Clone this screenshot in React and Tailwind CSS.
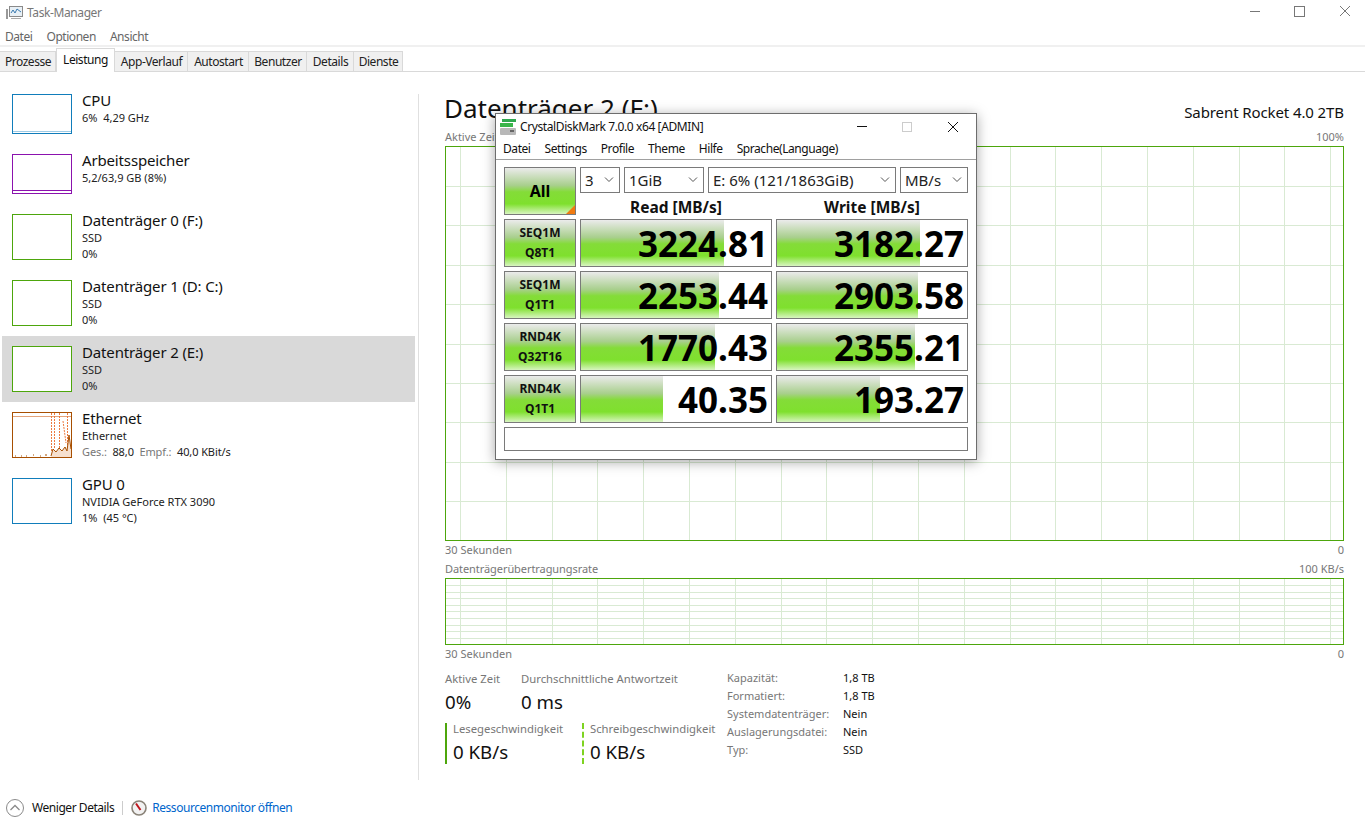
import React from 'react';

const tabs = [
    { t: 'Prozesse', w: 'w-[56px]' },
    { t: 'Leistung', w: 'w-[59px]', active: true },
    { t: 'App-Verlauf', w: 'w-[73px]' },
    { t: 'Autostart', w: 'w-[61px]' },
    { t: 'Benutzer', w: 'w-[58px]' },
    { t: 'Details', w: 'w-[47px]' },
    { t: 'Dienste', w: 'w-[49px]' },
];

const sidebarItems = [
    { name: 'CPU', lines: [['6%  4,29 GHz']], border: 'border-[#117dbb]', h: 'h-[40px]', row: 'h-[50px]', kind: 'cpu' },
    { name: 'Arbeitsspeicher', lines: [['5,2/63,9 GB (8%)']], border: 'border-[#8b12ae]', h: 'h-[40px]', row: 'h-[60px] pt-[10px]', kind: 'ram' },
    { name: 'Datenträger 0 (F:)', lines: [['SSD'], ['0%']], border: 'border-[#4da60c]', h: 'h-[46px]', row: 'h-[66px] pt-[10px]' },
    { name: 'Datenträger 1 (D: C:)', lines: [['SSD'], ['0%']], border: 'border-[#4da60c]', h: 'h-[46px]', row: 'h-[66px] pt-[10px]' },
    { name: 'Datenträger 2 (E:)', lines: [['SSD'], ['0%']], border: 'border-[#4da60c]', h: 'h-[46px]', row: 'h-[66px] pt-[10px]', active: true },
    { name: 'Ethernet', lines: [['Ethernet'], ['Ges.:', '88,0', 'Empf.:', '40,0 KBit/s']], border: 'border-[#a74f01]', h: 'h-[46px]', row: 'h-[66px] pt-[10px]', kind: 'eth' },
    { name: 'GPU 0', lines: [['NVIDIA GeForce RTX 3090'], ['1%  (45 °C)']], border: 'border-[#117dbb]', h: 'h-[46px]', row: 'h-[66px] pt-[10px]' },
];

const results = [
    { a: 'SEQ1M', b: 'Q8T1', read: '3224.81', readW: 143, write: '3182.27', writeW: 143 },
    { a: 'SEQ1M', b: 'Q1T1', read: '2253.44', readW: 138, write: '2903.58', writeW: 141 },
    { a: 'RND4K', b: 'Q32T16', read: '1770.43', readW: 134, write: '2355.21', writeW: 138 },
    { a: 'RND4K', b: 'Q1T1', read: '40.35', readW: 82, write: '193.27', writeW: 103 },
];

const stats = [
    ['Kapazität:', '1,8 TB'],
    ['Formatiert:', '1,8 TB'],
    ['Systemdatenträger:', 'Nein'],
    ['Auslagerungsdatei:', 'Nein'],
    ['Typ:', 'SSD'],
];

function EthGraph() {
    return (
        <svg viewBox="0 0 58 44" className="absolute inset-0 w-full h-full">
            <path d="M0 3.5H58" stroke="#e3a47c" fill="none" />
            <path d="M38.5 0V38M41.5 0V36M46.5 0V36M50 8L53 30M54.5 0V36" stroke="#ec7a40" strokeDasharray="2 1" fill="none" />
            <path d="M38 44L40 36L43 39L46 35L49 38L52 34L54 38L56 22L58 36V44Z" fill="#f6e0cf" />
            <path d="M38 43L40 36L43 39L46 35L49 38L52 34L54 38L56 22L58 36" stroke="#a74f01" fill="none" />
            <path d="M2 43h1M8 43h1M13 43h1M20 42h1M27 43h1M32 42h2" stroke="#a74f01" fill="none" />
        </svg>
    );
}

function SidebarItem({ item }) {
    return (
        <div className={`flex items-start pl-[10px] ${item.row} ${item.active ? 'bg-[#d9d9d9]' : ''}`}>
            <div className={`relative w-[60px] ${item.h} shrink-0 border ${item.border} bg-white`}>
                {item.kind === 'eth' && <EthGraph />}
                {item.kind === 'cpu' && <div className="absolute left-0 right-0 bottom-[1px] h-px bg-[#9fcbe5]" />}
                {item.kind === 'ram' && <div className="absolute left-0 right-0 bottom-0 h-[3px] border-t border-[#8b12ae]" />}
            </div>
            <div className="ml-[10px] -mt-[3px]">
                <div className="text-[15px] leading-[19px] tracking-[-0.15px] text-[#111]">{item.name}</div>
                {item.lines.map((parts, i) => (
                    <div key={i} className="text-[11px] leading-[16px] text-[#222] whitespace-pre">
                        {parts.length === 1 ? parts[0] : (
                            <span className="tracking-[-0.1px]">
                                <span className="text-[#777]">{parts[0]}</span>{'  '}{parts[1]}{'  '}<span className="text-[#777]">{parts[2]}</span>{'  '}{parts[3]}
                            </span>
                        )}
                    </div>
                ))}
            </div>
        </div>
    );
}

function Grid({ width, height, stepX, startX, stepY, startY }) {
    const xs = [];
    for (let x = startX; x < width; x += stepX) xs.push(Math.round(x) + 0.5);
    const ys = [];
    for (let y = startY; y < height; y += stepY) ys.push(Math.round(y) + 0.5);
    return (
        <svg width={width} height={height} className="block">
            {xs.map((x) => <line key={x} x1={x} x2={x} y1="0" y2={height} stroke="#d9ead3" />)}
            {ys.map((y) => <line key={y} y1={y} y2={y} x1="0" x2={width} stroke="#d9ead3" />)}
        </svg>
    );
}

function Select({ w, value }) {
    return (
        <div className={`${w} h-[26px] border border-[#7a7a7a] bg-white flex items-center justify-between pl-[4px] pr-[5px] text-[15px] text-[#222]`}>
            <span>{value}</span>
            <svg width="10" height="6" viewBox="0 0 10 6" fill="none" stroke="#555"><path d="M1 0.5L5 4.5L9 0.5" /></svg>
        </div>
    );
}

function ResultCell({ value, barW }) {
    return (
        <div className="relative w-[192px] h-[48px] border border-[#7a7a7a] bg-white overflow-hidden">
            <div
                className="absolute left-0 top-0 bottom-0 bg-[linear-gradient(180deg,#ebebeb_0%,#a8cf8c_38%,#84dc38_52%,#7fe02e_78%,#d8f5c0_100%)]"
                style={{ width: barW }}
            />
            <div className="relative text-right pr-[3px] text-[35px] leading-[48px] font-bold text-black">{value}</div>
        </div>
    );
}

function CrystalDiskMark() {
    return (
        <div className="absolute left-[495px] top-[113px] w-[482px] h-[347px] bg-white border border-[#6d6d6d] shadow-[0_2px_12px_rgba(0,0,0,0.35)]">
            <div className="flex items-center h-[25px] pl-[3px] relative">
                <svg width="18" height="18" viewBox="0 0 18 18" className="shrink-0">
                    <rect x="3" y="1" width="14" height="3" fill="#2fa84f" />
                    <rect x="1" y="5" width="13" height="4" fill="#39b54a" />
                    <rect x="1" y="10" width="16" height="7" rx="1" fill="#b8b8b8" />
                    <rect x="11" y="12" width="4" height="2" fill="#666" />
                </svg>
                <span className="ml-[3px] text-[12px] tracking-[-0.4px] text-[#111]">CrystalDiskMark 7.0.0 x64 [ADMIN]</span>
                <svg width="102" height="12" viewBox="0 0 102 12" fill="none" className="absolute left-[361px] top-[7px]">
                    <path d="M0 5.5H10" stroke="#111" />
                    <rect x="45.5" y="1.5" width="9" height="9" stroke="#ccc" />
                    <path d="M91 1L101 11M101 1L91 11" stroke="#111" />
                </svg>
            </div>
            <div className="flex h-[21px] items-center gap-[14px] pl-[7px] text-[12px] tracking-[-0.43px] text-[#111] border-b border-[#a0a0a0]">
                <span>Datei</span>
                <span>Settings</span>
                <span>Profile</span>
                <span>Theme</span>
                <span>Hilfe</span>
                <span>Sprache(Language)</span>
            </div>
            <div className="pl-[8px] pt-[7px]">
                <div className="flex gap-[4px]">
                    <div className="relative w-[72px] h-[48px] border border-[#7a7a7a] flex items-center justify-center text-[16px] font-bold text-black bg-[linear-gradient(180deg,#ebebeb_0%,#a8cf8c_38%,#84dc38_52%,#7fe02e_78%,#d8f5c0_100%)]">
                        All
                        <div className="absolute right-0 bottom-0 w-0 h-0 border-l-[9px] border-l-transparent border-b-[9px] border-b-[#f07a10]" />
                    </div>
                    <div className="w-[388px]">
                        <div className="flex gap-[4px]">
                            <Select w="w-[40px]" value="3" />
                            <Select w="w-[80px]" value="1GiB" />
                            <Select w="w-[188px]" value="E: 6% (121/1863GiB)" />
                            <Select w="w-[68px]" value="MB/s" />
                        </div>
                        <div className="flex gap-[4px] h-[22px]">
                            <div className="w-[192px] text-center text-[15.5px] font-bold leading-[28px] text-[#111]">Read [MB/s]</div>
                            <div className="w-[192px] text-center text-[15.5px] font-bold leading-[28px] text-[#111]">Write [MB/s]</div>
                        </div>
                    </div>
                </div>
                <div className="flex flex-col gap-[4px] mt-[4px]">
                    {results.map((r) => (
                        <div key={r.a + r.b} className="flex gap-[4px]">
                            <div className="w-[72px] h-[48px] border border-[#7a7a7a] flex flex-col items-center justify-center text-[12px] leading-[20px] font-bold text-[#111] bg-[linear-gradient(180deg,#ebebeb_0%,#a8cf8c_38%,#84dc38_52%,#7fe02e_78%,#d8f5c0_100%)]">
                                <span>{r.a}</span>
                                <span>{r.b}</span>
                            </div>
                            <ResultCell value={r.read} barW={r.readW} />
                            <ResultCell value={r.write} barW={r.writeW} />
                        </div>
                    ))}
                    <div className="w-[464px] h-[24px] border border-[#7a7a7a]" />
                </div>
            </div>
        </div>
    );
}

export default function App() {
    return (
        <div className="relative w-[1365px] h-[831px] bg-white overflow-hidden font-['Noto_Sans',sans-serif] text-[12px]">
            <div className="flex items-center h-[26px] pl-[5px] relative">
                <svg width="18" height="16" viewBox="0 0 18 16" fill="none">
                    <rect x="4.5" y="1.5" width="13" height="10" fill="#e8f0f6" stroke="#8a8a8a" />
                    <path d="M6 8L8 5L10 8L12 4L16 7" stroke="#3a7ab0" />
                    <rect x="1" y="4" width="2" height="10" fill="#999" />
                    <path d="M6 13.5H16" stroke="#aaa" />
                </svg>
                <span className="ml-[4px] text-[#777] tracking-[-0.4px]">Task-Manager</span>
                <svg width="110" height="14" viewBox="0 0 110 14" fill="none" stroke="#777" className="absolute left-[1250px] top-[4px]">
                    <path d="M0 7.5H10" />
                    <rect x="44.5" y="2.5" width="10" height="10" />
                    <path d="M90 2L100 12M100 2L90 12" />
                </svg>
            </div>
            <div className="flex h-[19px] items-center pt-[3px] text-[#666] tracking-[-0.45px] pl-[5px] gap-[14px]">
                <span>Datei</span>
                <span>Optionen</span>
                <span>Ansicht</span>
            </div>
            <div className="h-[2px] bg-[#f0f0f0]" />
            <div className="flex items-end h-[25px] border-b border-[#d9d9d9] tracking-[-0.45px]">
                {tabs.map(({ t, w, active }) => (
                    active
                        ? <div key={t} className={`${w} h-[24px] -mb-px text-center bg-white border border-b-0 border-[#d9d9d9] leading-[21px] text-[#111] relative`}>{t}</div>
                        : <div key={t} className={`${w} h-[20px] pl-px text-center bg-[#f0f0f0] border-t border-r border-[#d9d9d9] leading-[20px] text-[#222]`}>{t}</div>
                ))}
            </div>
            <div className="flex h-[708px]">
                <div className="w-[419px] shrink-0 pt-[22px]">
                    <div className="h-[686px] border-r border-[#e0e0e0] pl-[2px] pr-[3px]">
                        {sidebarItems.map((item) => <SidebarItem key={item.name} item={item} />)}
                    </div>
                </div>
                <div className="flex-1 pl-[26px] pr-[22px] pt-[20px]">
                    <div className="flex justify-between items-start h-[37px]">
                        <span className="text-[26px] leading-[32px] -ml-px text-[#111]">Datenträger 2 (F:)</span>
                        <span className="text-[15px] leading-[20px] mt-[10px] tracking-[-0.1px] text-[#111]">Sabrent Rocket 4.0 2TB</span>
                    </div>
                    <div className="flex justify-between h-[17px] text-[11px] text-[#777]">
                        <span>Aktive Zeit</span>
                        <span>100%</span>
                    </div>
                    <div className="border border-[#4da60c] w-[899px] h-[395px]">
                        <Grid width={897} height={393} stepX={45.8} startX={14} stepY={39.4} startY={39} />
                    </div>
                    <div className="flex justify-between text-[11px] text-[#777] h-[19px] leading-[18px]">
                        <span>30 Sekunden</span><span>0</span>
                    </div>
                    <div className="flex justify-between text-[11px] text-[#777] h-[18px] leading-[18px]">
                        <span className="tracking-[-0.07px]">Datenträgerübertragungsrate</span><span>100 KB/s</span>
                    </div>
                    <div className="border border-[#4da60c] w-[899px] h-[67px]">
                        <Grid width={897} height={65} stepX={45.8} startX={14} stepY={6.6} startY={6} />
                    </div>
                    <div className="flex justify-between text-[11px] text-[#777] h-[18px] leading-[18px]">
                        <span>30 Sekunden</span><span>0</span>
                    </div>
                    <div className="flex mt-[7px]">
                        <div className="w-[282px]">
                            <div className="flex">
                                <div className="w-[76px]">
                                    <div className="text-[11.3px] leading-[18px] text-[#777]">Aktive Zeit</div>
                                    <div className="text-[18.7px] leading-[27px] text-[#111]">0%</div>
                                </div>
                                <div>
                                    <div className="text-[11.3px] leading-[18px] text-[#777]">Durchschnittliche Antwortzeit</div>
                                    <div className="text-[18.7px] leading-[27px] text-[#111]">0 ms</div>
                                </div>
                            </div>
                            <div className="flex mt-[8px]">
                                <div className="w-[137px] h-[41px] border-l-2 border-[#4da60c] pl-[6px]">
                                    <div className="text-[11.3px] leading-[12px] text-[#777]">Lesegeschwindigkeit</div>
                                    <div className="text-[18.7px] leading-[27px] mt-[3px] text-[#111]">0 KB/s</div>
                                </div>
                                <div className="h-[41px] border-l-2 border-dashed border-[#7ed321] pl-[6px]">
                                    <div className="text-[11.3px] leading-[12px] text-[#777]">Schreibgeschwindigkeit</div>
                                    <div className="text-[18.7px] leading-[27px] mt-[3px] text-[#111]">0 KB/s</div>
                                </div>
                            </div>
                        </div>
                        <div className="grid grid-cols-[116px_auto] auto-rows-[18px] -mt-px text-[11px] leading-[18px]">
                            {stats.map(([label, value]) => (
                                <React.Fragment key={label}>
                                    <span className="text-[#777]">{label}</span>
                                    <span className="text-[#111]">{value}</span>
                                </React.Fragment>
                            ))}
                        </div>
                    </div>
                </div>
            </div>
            <div className="flex items-center h-[20px] mt-[18px] pl-[6px] tracking-[-0.45px]">
                <svg width="18" height="18" viewBox="0 0 18 18" fill="none" stroke="#8a8a8a">
                    <circle cx="9" cy="9" r="8.5" />
                    <path d="M4.5 11L9 6.5L13.5 11" strokeWidth="1.3" />
                </svg>
                <span className="ml-[8px] text-[#111]">Weniger Details</span>
                <div className="w-px h-[14px] bg-[#ccc] ml-[8px]" />
                <svg width="16" height="16" viewBox="0 0 16 16" fill="none" className="ml-[8px]">
                    <circle cx="8" cy="8" r="7" fill="#f2f2f2" stroke="#8a8378" strokeWidth="1.6" />
                    <path d="M5 3.5L9.5 10" stroke="#c0141c" strokeWidth="2" />
                </svg>
                <span className="ml-[5px] text-[#0066cc]">Ressourcenmonitor öffnen</span>
            </div>
            <CrystalDiskMark />
        </div>
    );
}
